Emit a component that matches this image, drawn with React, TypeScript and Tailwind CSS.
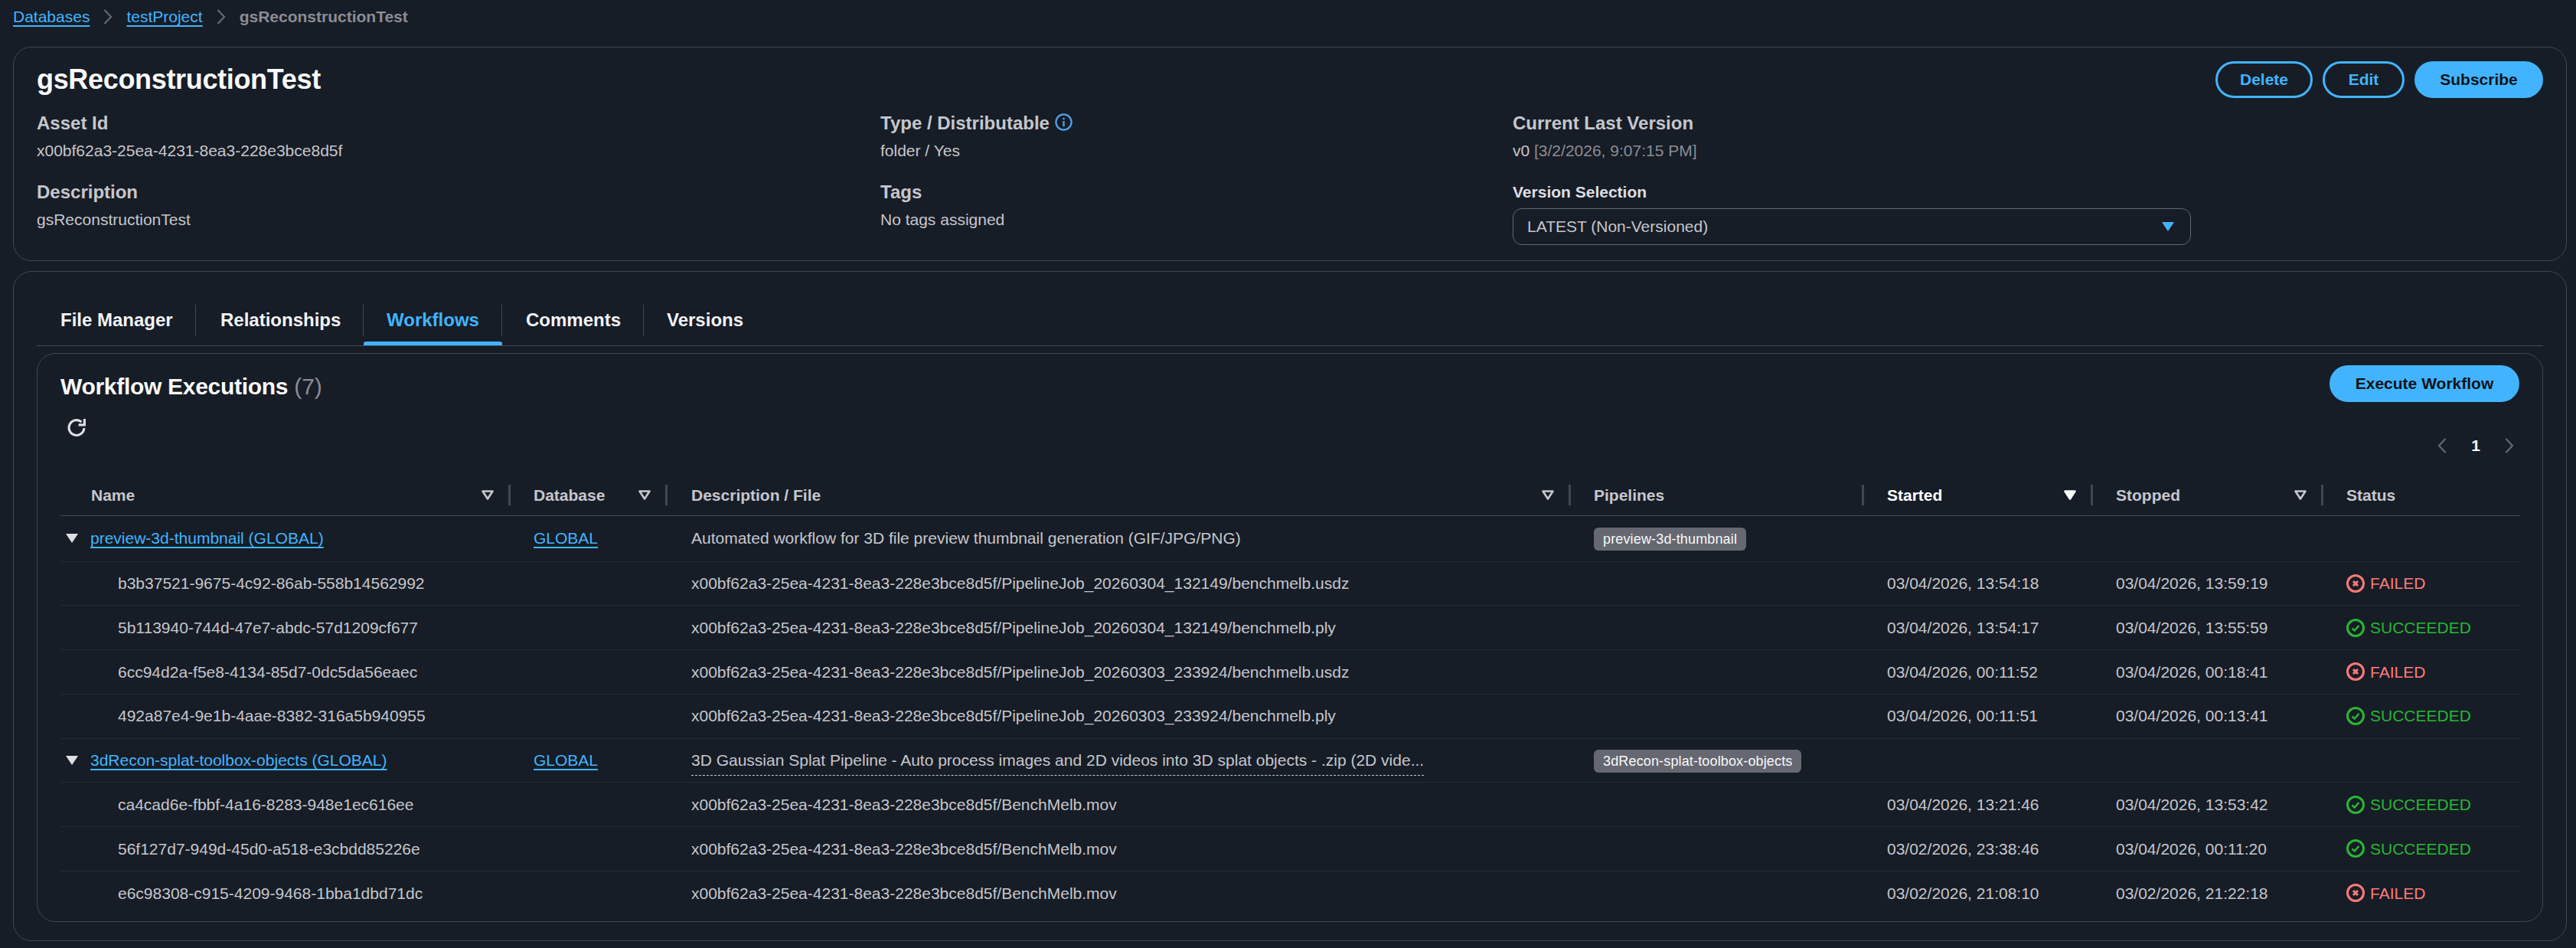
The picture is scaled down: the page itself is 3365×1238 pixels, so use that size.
const rows = [
	{ group: true, name: "preview-3d-thumbnail (GLOBAL)", description: "Automated workflow for 3D file preview thumbnail generation (GIF/JPG/PNG)", pipeline: "preview-3d-thumbnail" },
	{ name: "b3b37521-9675-4c92-86ab-558b14562992", description: "x00bf62a3-25ea-4231-8ea3-228e3bce8d5f/PipelineJob_20260304_132149/benchmelb.usdz", started: "03/04/2026, 13:54:18", stopped: "03/04/2026, 13:59:19", ok: false },
	{ name: "5b113940-744d-47e7-abdc-57d1209cf677", description: "x00bf62a3-25ea-4231-8ea3-228e3bce8d5f/PipelineJob_20260304_132149/benchmelb.ply", started: "03/04/2026, 13:54:17", stopped: "03/04/2026, 13:55:59", ok: true },
	{ name: "6cc94d2a-f5e8-4134-85d7-0dc5da56eaec", description: "x00bf62a3-25ea-4231-8ea3-228e3bce8d5f/PipelineJob_20260303_233924/benchmelb.usdz", started: "03/04/2026, 00:11:52", stopped: "03/04/2026, 00:18:41", ok: false },
	{ name: "492a87e4-9e1b-4aae-8382-316a5b940955", description: "x00bf62a3-25ea-4231-8ea3-228e3bce8d5f/PipelineJob_20260303_233924/benchmelb.ply", started: "03/04/2026, 00:11:51", stopped: "03/04/2026, 00:13:41", ok: true },
	{ group: true, name: "3dRecon-splat-toolbox-objects (GLOBAL)", description: "3D Gaussian Splat Pipeline - Auto process images and 2D videos into 3D splat objects - .zip (2D vide...", pipeline: "3dRecon-splat-toolbox-objects", dashed: true },
	{ name: "ca4cad6e-fbbf-4a16-8283-948e1ec616ee", description: "x00bf62a3-25ea-4231-8ea3-228e3bce8d5f/BenchMelb.mov", started: "03/04/2026, 13:21:46", stopped: "03/04/2026, 13:53:42", ok: true },
	{ name: "56f127d7-949d-45d0-a518-e3cbdd85226e", description: "x00bf62a3-25ea-4231-8ea3-228e3bce8d5f/BenchMelb.mov", started: "03/02/2026, 23:38:46", stopped: "03/04/2026, 00:11:20", ok: true },
	{ name: "e6c98308-c915-4209-9468-1bba1dbd71dc", description: "x00bf62a3-25ea-4231-8ea3-228e3bce8d5f/BenchMelb.mov", started: "03/02/2026, 21:08:10", stopped: "03/02/2026, 21:22:18", ok: false },
];

const columns = [
	{ label: "Name", width: "w-[588px]", pad: "pl-[40px]", sort: "hollow", divider: true },
	{ label: "Database", width: "w-[205px]", pad: "pl-[30px]", sort: "hollow", divider: true },
	{ label: "Description / File", width: "w-[1180px]", pad: "pl-[31px]", sort: "hollow", divider: true },
	{ label: "Pipelines", width: "w-[383px]", pad: "pl-[30px]", sort: "", divider: true },
	{ label: "Started", width: "w-[299px]", pad: "pl-[30px]", sort: "filled", divider: true },
	{ label: "Stopped", width: "w-[301px]", pad: "pl-[30px]", sort: "hollow", divider: true },
	{ label: "Status", width: "w-[257px]", pad: "pl-[30px]", sort: "", divider: false },
];

const tabs = [
	{ label: "File Manager", box: "w-[208px] pl-[31px] border-r" },
	{ label: "Relationships", box: "w-[219px] pl-[32px] border-r" },
	{ label: "Workflows", box: "w-[181px] pl-[30px] border-r" },
	{ label: "Comments", box: "w-[185px] pl-[31px] border-r" },
	{ label: "Versions", box: "pl-[30px]" },
];

function Chevron({ left = false, className = "" }: { left?: boolean; className?: string }) {
	return (
		<svg viewBox="0 0 12 20" className={ className } fill="none" stroke="currentColor" strokeWidth="2.2">
			<path d={ left ? "M10.5 1 2 10l8.5 9" : "M1.5 1 10 10l-8.5 9" } />
		</svg>
	);
}

function SortIcon({ filled }: { filled: boolean }) {
	return (
		<svg viewBox="0 0 16 13" className="absolute right-[22px] top-[19px] w-[16px] h-[13px]">
			<path
				d="M1.5 1.5h13L8 11.5Z"
				fill={ filled ? "#ffffff" : "none" }
				stroke={ filled ? "#ffffff" : "#c6c6cd" }
				strokeWidth="2.6"
				strokeLinejoin="round"
			/>
		</svg>
	);
}

function StatusIcon({ ok }: { ok: boolean }) {
	return (
		<svg viewBox="0 0 24 24" className="w-[24px] h-[24px] shrink-0" fill="none" stroke="currentColor" strokeWidth="3">
			<circle cx="12" cy="12" r="10.5" />
			{ ok
				? <path d="m7.5 12.5 3.2 3 5.8-6.5" strokeWidth="2.6" />
				: <path d="m9 9 6 6m0-6-6 6" strokeWidth="3" /> }
		</svg>
	);
}

function Status({ ok }: { ok: boolean }) {
	return (
		<span className={ `flex items-center gap-[7px] ${ ok ? "text-[#2bb534]" : "text-[#ff7a7a]" }` }>
			<StatusIcon ok={ ok } />
			{ ok ? "SUCCEEDED" : "FAILED" }
		</span>
	);
}

function Field({ label, children }: { label: string; children: React.ReactNode }) {
	return (
		<div>
			<div className="h-[30px] flex items-center gap-[7px] text-[24px] leading-[30px] font-bold text-[#c6c6cd]">{ label }</div>
			<div className="mt-[6px] h-[30px] leading-[30px] text-[#c6c6cd]">{ children }</div>
		</div>
	);
}

export default function App() {
	return (
		<div className="w-[3365px] h-[1238px] overflow-hidden bg-[#161d26] text-[21px] text-[#c6c6cd] font-['Liberation_Sans',Arial,sans-serif]">
			<nav className="h-[44px] pl-[17px] flex items-center">
				<a className="text-[#42b4ff] underline underline-offset-[4px] decoration-2">Databases</a>
				<Chevron className="w-[12px] h-[20px] mx-[18px] text-[#656871]" />
				<a className="text-[#42b4ff] underline underline-offset-[4px] decoration-2">testProject</a>
				<Chevron className="w-[12px] h-[20px] mx-[18px] text-[#656871]" />
				<span className="font-bold text-[#8c8c94]">gsReconstructionTest</span>
			</nav>

			<section className="ml-[17px] mr-[12px] mt-[17px] h-[280px] rounded-[24px] border border-[#424650] px-[30px] pt-[18px]">
				<div className="flex items-center justify-between h-[48px]">
					<h1 className="text-[36px] font-bold text-[#f9f9fa] tracking-[-0.33px]">gsReconstructionTest</h1>
					<div className="flex gap-[13px]">
						<button className="h-[48px] w-[127px] rounded-full border-[3px] border-[#42b4ff] font-bold text-[#42b4ff]">Delete</button>
						<button className="h-[48px] w-[107px] rounded-full border-[3px] border-[#42b4ff] font-bold text-[#42b4ff]">Edit</button>
						<button className="h-[48px] w-[168px] rounded-full bg-[#42b4ff] font-bold text-[#0f141a]">Subscribe</button>
					</div>
				</div>
				<div className="mt-[18px] grid grid-cols-[1102px_826px_1fr] gap-y-[24px]">
					<Field label="Asset Id">x00bf62a3-25ea-4231-8ea3-228e3bce8d5f</Field>
					<div>
						<div className="h-[30px] flex items-center gap-[7px] text-[24px] font-bold">
							Type / Distributable
							<svg viewBox="0 0 24 24" className="w-[23px] h-[23px] -mt-[3px] text-[#539fe5]" fill="none" stroke="currentColor" strokeWidth="2.4">
								<circle cx="12" cy="12" r="10.5" />
								<path d="M12 10.5V18M12 6v2.6" />
							</svg>
						</div>
						<div className="mt-[6px] h-[30px] leading-[30px]">folder / Yes</div>
					</div>
					<Field label="Current Last Version">v0 <span className="text-[#8c8c94]">[3/2/2026, 9:07:15 PM]</span></Field>
					<Field label="Description">gsReconstructionTest</Field>
					<Field label="Tags">No tags assigned</Field>
					<div>
						<div className="h-[30px] leading-[30px] font-bold text-[#dedee3]">Version Selection</div>
						<div className="mt-[6px] w-[886px] h-[48px] rounded-[12px] border border-[#656871] pl-[18px] pr-[21px] flex items-center justify-between">
							LATEST (Non-Versioned)
							<svg viewBox="0 0 16 12" className="w-[16px] h-[12px]"><path d="M0 0h16L8 12Z" fill="#42b4ff" /></svg>
						</div>
					</div>
				</div>
			</section>

			<section className="ml-[17px] mr-[12px] mt-[13px] h-[875px] rounded-[24px] border border-[#424650] px-[30px] pt-[30px]">
				<div className="flex h-[67px] border-b border-[#424650] text-[24px] font-bold text-[#f3f3f7]">
					{ tabs.map(tab => (
						<div key={ tab.label } className="relative flex items-center">
							<span className={ `h-[41px] flex items-center border-[#424650] ${ tab.box } ${ tab.label === "Workflows" ? "text-[#42b4ff]" : "" }` }>{ tab.label }</span>
							{ tab.label === "Workflows" && <span className="absolute left-0 right-0 bottom-0 h-[5px] rounded-t-[3px] bg-[#42b4ff]" /> }
						</div>
					)) }
				</div>

				<div className="mt-[9px] h-[743px] rounded-[24px] border border-[#424650] px-[30px] pt-[15px]">
					<div className="flex items-center justify-between h-[48px]">
						<h2 className="mt-[6px] text-[30px] font-bold text-[#f9f9fa] tracking-[-0.3px]">
							Workflow Executions <span className="font-normal text-[#8c8c94] tracking-normal">(7)</span>
						</h2>
						<button className="h-[48px] w-[248px] rounded-full bg-[#42b4ff] font-bold text-[#0f141a]">Execute Workflow</button>
					</div>

					<svg viewBox="0 0 24 24" className="mt-[21px] ml-[9px] w-[25px] h-[25px] text-[#dedee3]" fill="none" stroke="currentColor" strokeWidth="3">
						<path d="M21 12.5a9.5 9.5 0 1 1-3.2-7.6" />
						<path d="M21.5 1v7.5H14" />
					</svg>

					<div className="mt-[1px] h-[20px] flex items-center justify-end pr-[7px]">
						<Chevron left className="w-[12px] h-[20px] text-[#656871]" />
						<span className="mx-[32px] font-bold text-[#f9f9fa]">1</span>
						<Chevron className="w-[12px] h-[20px] text-[#656871]" />
					</div>

					<table className="mt-[29px] w-[3213px] table-fixed">
						<thead>
							<tr className="h-[52px] border-b border-[#424650]">
								{ columns.map(column => (
									<th key={ column.label } className={ `relative text-left font-bold ${ column.width } ${ column.pad } ${ column.label === "Started" ? "text-white" : "text-[#c6c6cd]" }` }>
										{ column.label }
										{ column.sort && <SortIcon filled={ column.sort === "filled" } /> }
										{ column.divider && <span className="absolute right-0 top-[12px] w-[3px] h-[27px] bg-[#424650]" /> }
									</th>
								)) }
							</tr>
						</thead>
						<tbody>
							{ rows.map((row, index) => (
								<tr key={ row.name } className={ `${ index === 0 ? "h-[60px]" : "h-[57.75px]" } ${ index < rows.length - 1 ? "border-b border-[#232b37]" : "" }` }>
									<td>
										{ row.group ? (
											<div className="flex items-center pl-[7px] gap-[16px]">
												<svg viewBox="0 0 16 12" className="w-[16px] h-[12px]"><path d="M0 0h16L8 12Z" fill="#dedee3" /></svg>
												<a className="text-[#42b4ff] underline underline-offset-[4px] decoration-2">{ row.name }</a>
											</div>
										) : <div className="pl-[75px]">{ row.name }</div> }
									</td>
									<td className="pl-[30px]">
										{ row.group && <a className="text-[#42b4ff] underline underline-offset-[4px] decoration-2">GLOBAL</a> }
									</td>
									<td className="pl-[31px]">
										<span className={ row.dashed ? "inline-block border-b border-dashed border-[#c6c6cd] pt-[4px] pb-[3px]" : "" }>{ row.description }</span>
									</td>
									<td className="pl-[30px]">
										{ row.pipeline && <span className="inline-flex items-center h-[30px] px-[12px] rounded-[6px] bg-[#656871] text-[18px] tracking-[0.15px] text-[#f9f9fa]">{ row.pipeline }</span> }
									</td>
									<td className="pl-[30px]">{ row.started }</td>
									<td className="pl-[30px]">{ row.stopped }</td>
									<td className="pl-[30px]">
										{ !row.group && <Status ok={ !!row.ok } /> }
									</td>
								</tr>
							)) }
						</tbody>
					</table>
				</div>
			</section>
		</div>
	);
}
